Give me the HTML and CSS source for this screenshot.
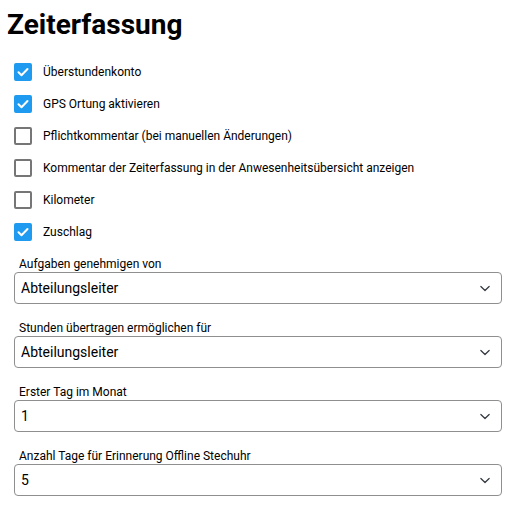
FILE: index.html
```html
<!DOCTYPE html>
<html lang="de">
  <head>
    <meta charset="UTF-8" />
    <meta name="viewport" content="width=device-width, initial-scale=1.0" />
    <title>Zeiterfassung</title>
    <link rel="stylesheet" href="styles.css">
  </head>
  <body>
    <div class="settings">
      <h1 class="title">Zeiterfassung</h1>

      <div class="check-list">
        <label class="check-row">
          <input type="checkbox" checked />
          <span>Überstundenkonto</span>
        </label>
        <label class="check-row">
          <input type="checkbox" checked />
          <span>GPS Ortung aktivieren</span>
        </label>
        <label class="check-row">
          <input type="checkbox" />
          <span>Pflichtkommentar (bei manuellen Änderungen)</span>
        </label>
        <label class="check-row">
          <input type="checkbox" />
          <span>Kommentar der Zeiterfassung in der Anwesenheitsübersicht anzeigen</span>
        </label>
        <label class="check-row">
          <input type="checkbox" />
          <span>Kilometer</span>
        </label>
        <label class="check-row">
          <input type="checkbox" checked />
          <span>Zuschlag</span>
        </label>
      </div>

      <div class="field">
        <label class="field-label" for="approve">Aufgaben genehmigen von</label>
        <select class="field-select" id="approve">
          <option>Abteilungsleiter</option>
        </select>
      </div>

      <div class="field">
        <label class="field-label" for="transfer">Stunden übertragen ermöglichen für</label>
        <select class="field-select" id="transfer">
          <option>Abteilungsleiter</option>
        </select>
      </div>

      <div class="field">
        <label class="field-label" for="firstDay">Erster Tag im Monat</label>
        <select class="field-select" id="firstDay">
          <option>1</option>
        </select>
      </div>

      <div class="field">
        <label class="field-label" for="reminder">Anzahl Tage für Erinnerung Offline Stechuhr</label>
        <select class="field-select" id="reminder">
          <option>5</option>
        </select>
      </div>
    </div>
  </body>
</html>
```

FILE: styles.css
```css
:root {
  --text-color: #212529;
  --check-color: #1e9bf0;
  --check-border: #767676;
  --border-color: #8f8f8f;
}
html,
body {
  margin: 0;
  padding: 0;
  background: #fff;
  color: var(--text-color);
  font-family: Roboto, "Liberation Sans", sans-serif;
}

.settings {
  padding: 0 14px 0 7px;
}

.title {
  margin: 0;
  padding-top: 7px;
  height: 49px;
  font-size: 28px;
  font-weight: 700;
  line-height: 36px;
  color: #000;
}

.check-list {
  display: flex;
  flex-direction: column;
  padding-left: 7px;
}
.check-row {
  display: flex;
  align-items: center;
  gap: 11px;
  height: 32px;
  font-size: 12px;
  color: #000;
  cursor: pointer;
}
.check-row input {
  appearance: none;
  -webkit-appearance: none;
  box-sizing: border-box;
  width: 18px;
  height: 18px;
  margin: 0;
  border: 2px solid var(--check-border);
  border-radius: 2px;
  background: #fff;
}
.check-row input:checked {
  border-color: var(--check-color);
  background-color: var(--check-color);
  background-image: url("data:image/svg+xml,%3csvg xmlns='http://www.w3.org/2000/svg' viewBox='0 0 14 14'%3e%3cpath fill='none' stroke='%23fff' stroke-width='2' stroke-linecap='round' stroke-linejoin='round' d='M2.5 7.2l3 3 6-6.2'/%3e%3c/svg%3e");
  background-repeat: no-repeat;
  background-position: center;
  background-size: 14px 14px;
}

.field {
  display: flex;
  flex-direction: column;
  padding-left: 7px;
  margin-bottom: 16px;
}
.field-label {
  height: 16px;
  line-height: 16px;
  padding-left: 5px;
  font-size: 12px;
  color: #000;
  margin-top: 8px;
}
.field + .field .field-label {
  margin-top: 0;
}
.field-select {
  appearance: none;
  -webkit-appearance: none;
  height: 32px;
  padding: 0 36px 0 6px;
  font-family: Roboto, "Liberation Sans", sans-serif;
  font-size: 14px;
  color: #000;
  background-color: #fff;
  background-image: url("data:image/svg+xml,%3csvg xmlns='http://www.w3.org/2000/svg' viewBox='0 0 16 16'%3e%3cpath fill='none' stroke='%23343a40' stroke-linecap='round' stroke-linejoin='round' stroke-width='1.8' d='m2 5 6 6 6-6'/%3e%3c/svg%3e");
  background-repeat: no-repeat;
  background-position: right 10px center;
  background-size: 12px 11px;
  border: 1px solid var(--border-color);
  border-radius: 4px;
}
```
